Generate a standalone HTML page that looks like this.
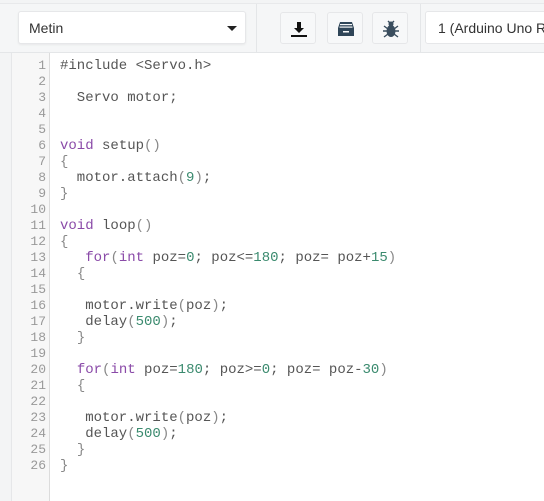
<!DOCTYPE html>
<html><head><meta charset="utf-8"><style>
*{margin:0;padding:0;box-sizing:border-box}
body{width:544px;height:501px;overflow:hidden;background:#fff;font-family:"Liberation Sans",sans-serif;position:relative}
.top{position:absolute;left:0;top:0;width:544px;height:53px;background:#f5f6f7;border-bottom:1px solid #e4e6e8}
.top .tl{position:absolute;left:0;top:0;width:544px;height:4px;border-bottom:1px solid #e8e9eb;background:#f3f4f5}
.sep{position:absolute;top:4px;width:1px;height:48px;background:#e4e6e8}
.dd{position:absolute;left:18px;top:11px;width:228px;height:33px;background:#fff;border:1px solid #e6e7e9;border-radius:3px;box-shadow:0 1px 2px rgba(0,0,0,.06)}
.dd span{position:absolute;left:10px;top:8px;font-size:14px;color:#333}
.dd i{position:absolute;right:8px;top:14px;border-left:5px solid transparent;border-right:5px solid transparent;border-top:5px solid #222}
.btn{position:absolute;top:12px;width:36px;height:32px;background:#f7f8f9;border:1px solid #e6e7e9;border-radius:3px}
.btn svg{position:absolute;left:8px;top:6px}
.sel{position:absolute;left:425px;top:11px;width:130px;height:33px;background:#fff;border:1px solid #e6e7e9;border-radius:3px}
.sel span{position:absolute;left:12px;top:8px;font-size:14px;color:#333;white-space:nowrap}
.lstrip{position:absolute;left:0;top:53px;width:12px;height:448px;background:#f3f4f5;border-right:1px solid #e6e7e9}
.gut{position:absolute;left:12px;top:53px;width:38px;height:448px;background:#f7f7f7;border-right:1px solid #dcdcdc}
.code{position:absolute;left:0;top:58px;font-family:"Courier New","Liberation Mono","DejaVu Sans Mono",monospace;font-size:14px;line-height:16px}
.ln{position:absolute;left:12px;width:34px;text-align:right;color:#999;font-size:13px}
.tx{position:absolute;left:60px;white-space:pre;color:#555}
.k{color:#8a4aa8}.n{color:#3a8a6e}.p{color:#888}
</style></head><body>
<div class="top"><div class="tl"></div>
<div class="sep" style="left:256px"></div><div class="sep" style="left:420px"></div>
<div class="dd"><span>Metin</span><i></i></div>
<div class="btn" style="left:280px"><svg width="20" height="20" viewBox="0 0 20 20"><path d="M8 3h4v6h3l-5 5-5-5h3z" fill="#111"/><rect x="2" y="16" width="16" height="2" fill="#111"/></svg></div>
<div class="btn" style="left:327px"><svg width="20" height="20" viewBox="0 0 20 20"><path d="M4 3h12l2 6v8H2V9z" fill="#2f4558"/><rect x="4" y="5" width="12" height="1.2" fill="#f7f8f9"/><rect x="3.5" y="7.5" width="13" height="1.2" fill="#f7f8f9"/><rect x="7" y="12" width="6" height="1.5" fill="#f7f8f9"/></svg></div>
<div class="btn" style="left:372px"><svg width="20" height="20" viewBox="0 0 20 20"><ellipse cx="10" cy="12" rx="4.5" ry="6" fill="#3a4d5e"/><circle cx="10" cy="5" r="2.5" fill="#3a4d5e"/><path d="M3 7l4 3M17 7l-4 3M2 12h4M18 12h-4M3 18l4-3M17 18l-4-3M7 2l2 2M13 2l-2 2" stroke="#3a4d5e" stroke-width="1.4"/></svg></div>
<div class="sel"><span>1 (Arduino Uno R3)</span></div>
</div>
<div class="lstrip"></div><div class="gut"></div>
<div class="code">
<div class="ln" style="top:0">1</div><div class="tx" style="top:0">#include &lt;Servo.h&gt;</div>
<div class="ln" style="top:16px">2</div>
<div class="ln" style="top:32px">3</div><div class="tx" style="top:32px">  Servo motor;</div>
<div class="ln" style="top:48px">4</div>
<div class="ln" style="top:64px">5</div>
<div class="ln" style="top:80px">6</div><div class="tx" style="top:80px"><span class="k">void</span> setup<span class="p">()</span></div>
<div class="ln" style="top:96px">7</div><div class="tx" style="top:96px"><span class="p">{</span></div>
<div class="ln" style="top:112px">8</div><div class="tx" style="top:112px">  motor.attach<span class="p">(</span><span class="n">9</span><span class="p">)</span>;</div>
<div class="ln" style="top:128px">9</div><div class="tx" style="top:128px"><span class="p">}</span></div>
<div class="ln" style="top:144px">10</div>
<div class="ln" style="top:160px">11</div><div class="tx" style="top:160px"><span class="k">void</span> loop<span class="p">()</span></div>
<div class="ln" style="top:176px">12</div><div class="tx" style="top:176px"><span class="p">{</span></div>
<div class="ln" style="top:192px">13</div><div class="tx" style="top:192px">   <span class="k">for</span><span class="p">(</span><span class="k">int</span> poz=<span class="n">0</span>; poz&lt;=<span class="n">180</span>; poz= poz+<span class="n">15</span><span class="p">)</span></div>
<div class="ln" style="top:208px">14</div><div class="tx" style="top:208px">  <span class="p">{</span></div>
<div class="ln" style="top:224px">15</div>
<div class="ln" style="top:240px">16</div><div class="tx" style="top:240px">   motor.write<span class="p">(</span>poz<span class="p">)</span>;</div>
<div class="ln" style="top:256px">17</div><div class="tx" style="top:256px">   delay<span class="p">(</span><span class="n">500</span><span class="p">)</span>;</div>
<div class="ln" style="top:272px">18</div><div class="tx" style="top:272px">  <span class="p">}</span></div>
<div class="ln" style="top:288px">19</div>
<div class="ln" style="top:304px">20</div><div class="tx" style="top:304px">  <span class="k">for</span><span class="p">(</span><span class="k">int</span> poz=<span class="n">180</span>; poz&gt;=<span class="n">0</span>; poz= poz-<span class="n">30</span><span class="p">)</span></div>
<div class="ln" style="top:320px">21</div><div class="tx" style="top:320px">  <span class="p">{</span></div>
<div class="ln" style="top:336px">22</div>
<div class="ln" style="top:352px">23</div><div class="tx" style="top:352px">   motor.write<span class="p">(</span>poz<span class="p">)</span>;</div>
<div class="ln" style="top:368px">24</div><div class="tx" style="top:368px">   delay<span class="p">(</span><span class="n">500</span><span class="p">)</span>;</div>
<div class="ln" style="top:384px">25</div><div class="tx" style="top:384px">  <span class="p">}</span></div>
<div class="ln" style="top:400px">26</div><div class="tx" style="top:400px"><span class="p">}</span></div>
</div>
</body></html>
